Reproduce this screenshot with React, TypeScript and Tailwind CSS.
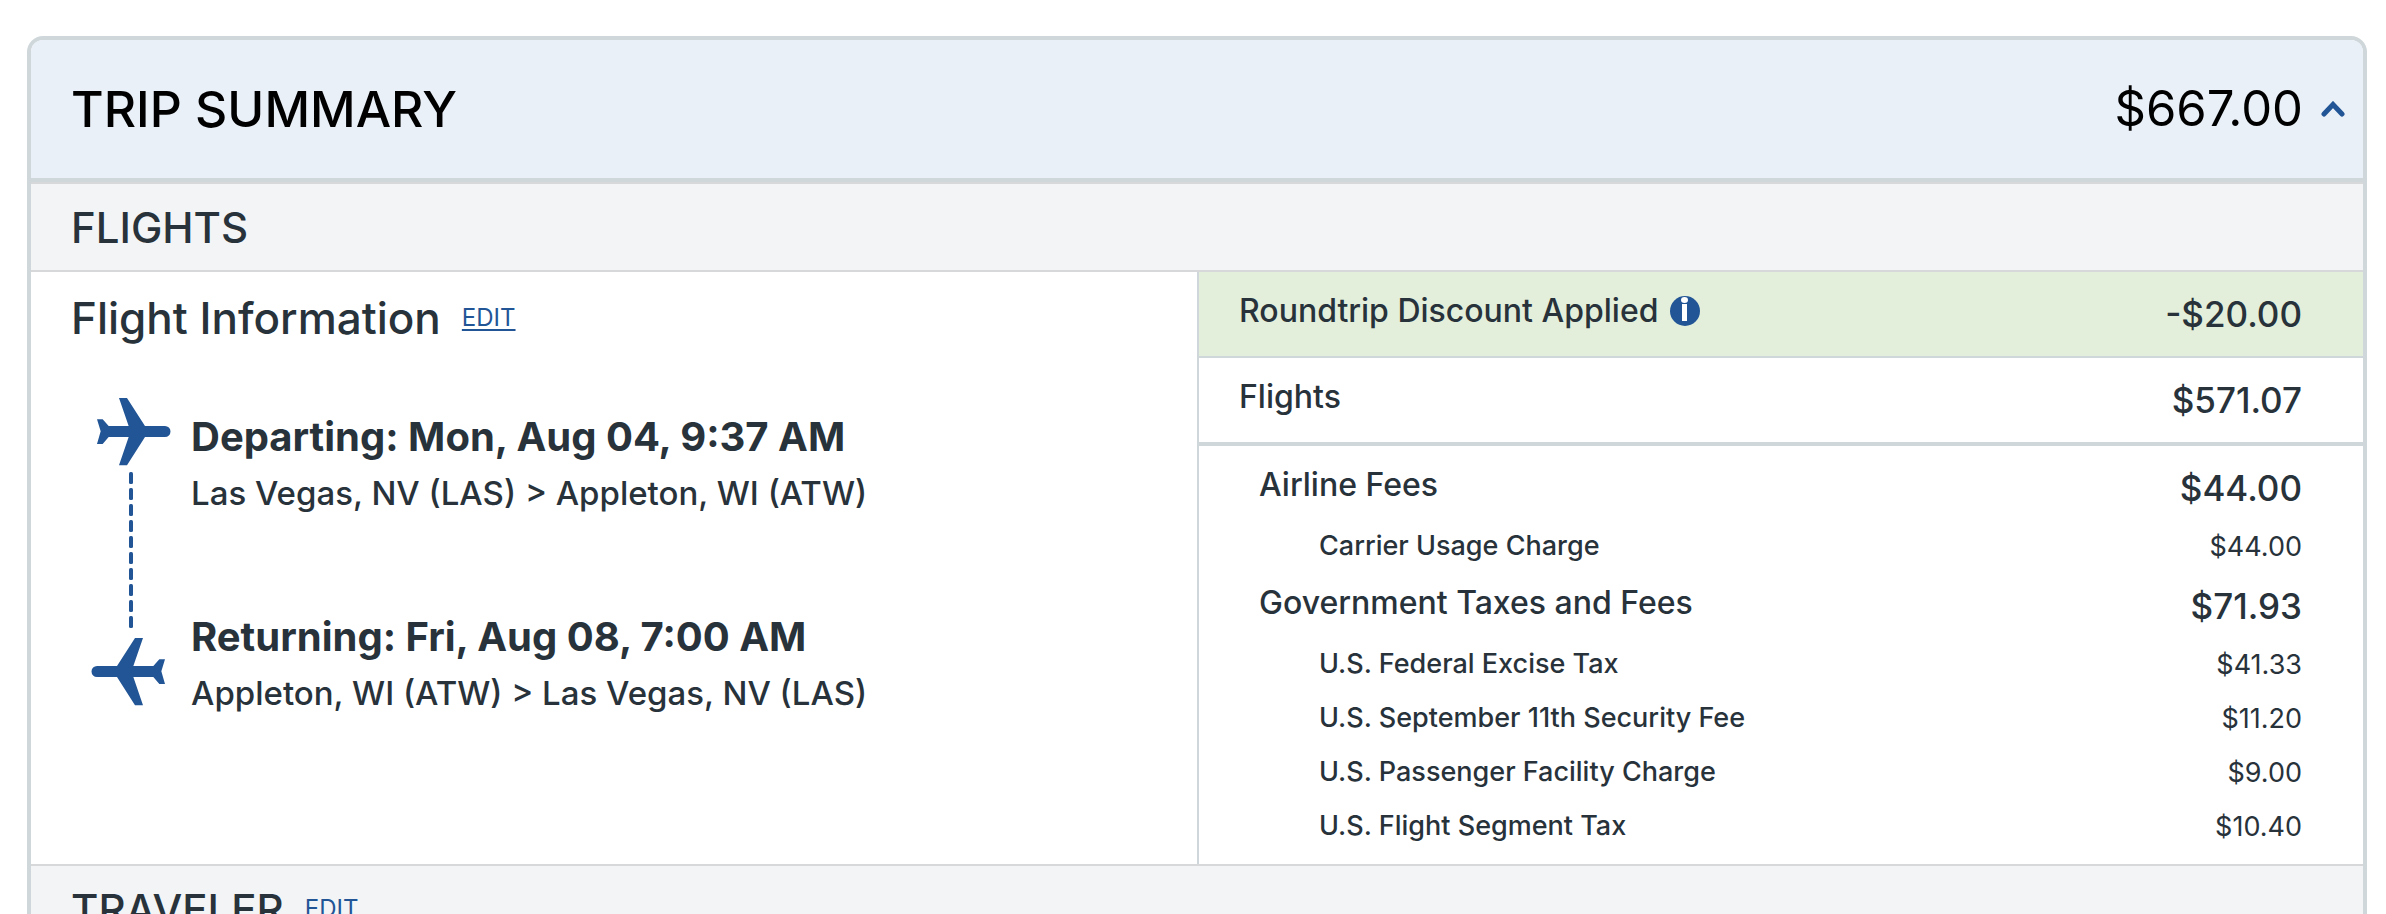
import { useState } from "react";

const fees = [
  { label: "Airline Fees", amount: "$44.00", items: [{ label: "Carrier Usage Charge", amount: "$44.00" }] },
  {
    label: "Government Taxes and Fees",
    amount: "$71.93",
    items: [
      { label: "U.S. Federal Excise Tax", amount: "$41.33" },
      { label: "U.S. September 11th Security Fee", amount: "$11.20" },
      { label: "U.S. Passenger Facility Charge", amount: "$9.00" },
      { label: "U.S. Flight Segment Tax", amount: "$10.40" },
    ],
  },
];

const legs = [
  { title: "Departing: Mon, Aug 04, 9:37 AM", route: "Las Vegas, NV (LAS) > Appleton, WI (ATW)" },
  { title: "Returning: Fri, Aug 08, 7:00 AM", route: "Appleton, WI (ATW) > Las Vegas, NV (LAS)" },
];

const planePath =
  "M0 64 H17 L35 84 H95 L66 0 H90 L144 84 H204 A16.500 16.500 0 0 1 204 117 H144 L90 202 H66 L95 117 H35 L17 138 H0 L11 100 Z";

// dashes between the two planes, 16px apart
const dashes = [0, 1, 2, 3, 4, 5, 6, 7, 8, 9];

function EditLink() {
  return (
    <a href="#edit" className="text-[24px] leading-8 text-[#225596] underline decoration-2 underline-offset-3">
      EDIT
    </a>
  );
}

function RouteGraphic() {
  return (
    <svg viewBox="0 0 80 308" className="w-20 h-[308px] shrink-0" fill="#225596" aria-hidden="true">
      <path d={planePath} transform="translate(6 0) scale(0.3333)" />
      {dashes.map((n) => (
        <rect key={n} x="38" y={74 + n * 16} width="4" height="12" rx="1.500" />
      ))}
      <path d={planePath} transform="translate(74 240) scale(-0.3333 0.3333)" />
    </svg>
  );
}

function FlightInformation() {
  return (
    <div className="pl-10 pt-6">
      <div className="flex items-center gap-[21px]">
        <h3 className="text-[44px] leading-11 font-medium">Flight Information</h3>
        <EditLink />
      </div>
      <div className="flex gap-5 pl-5 mt-[58px]">
        <RouteGraphic />
        <div className="flex flex-col gap-22 pt-[11px]">
          {legs.map((leg) => (
            <div key={leg.title}>
              <p className="text-[40px] leading-14 font-bold">{leg.title}</p>
              <p className="text-[33px] leading-14 font-medium">{leg.route}</p>
            </div>
          ))}
        </div>
      </div>
    </div>
  );
}

function InfoIcon() {
  return (
    <svg viewBox="0 0 30 30" className="size-[30px]" aria-hidden="true">
      <circle cx="15" cy="15" r="15" fill="#225596" />
      <ellipse cx="14.500" cy="4" rx="3.500" ry="3" fill="#fff" />
      <rect x="12" y="8" width="5" height="17" fill="#fff" />
    </svg>
  );
}

function PriceTable() {
  return (
    <table className="w-full border-separate border-spacing-0">
      <tbody>
        <tr className="h-[86px] bg-[#e3efdb]">
          <th scope="row" className="pl-10 pb-1.5 text-left text-[32px] font-medium border-b-2 border-[#cfd7da]">
            <span className="flex items-center gap-3">
              Roundtrip Discount Applied
              <button type="button" aria-label="Discount details" className="cursor-pointer">
                <InfoIcon />
              </button>
            </span>
          </th>
          <td className="pr-[61px] text-right text-[35px] font-medium border-b-2 border-[#cfd7da]">-$20.00</td>
        </tr>
        <tr className="h-[88px]">
          <th scope="row" className="pl-10 pb-1.5 text-left text-[32px] font-medium border-b-4 border-[#cfd7da]">Flights</th>
          <td className="pr-[61px] text-right text-[35px] font-medium border-b-4 border-[#cfd7da]">$571.07</td>
        </tr>
      </tbody>
    </table>
  );
}

function FeeTable() {
  return (
    <table className="w-full my-[10px] border-separate border-spacing-0">
      {fees.map((group) => (
        <tbody key={group.label}>
          <tr className="h-16">
            <th scope="row" className="pl-15 pb-1.5 text-left text-[32px] font-medium">{group.label}</th>
            <td className="pr-[61px] text-right text-[35px] font-medium">{group.amount}</td>
          </tr>
          {group.items.map((item) => (
            <tr key={item.label} className="h-[54px]">
              <th scope="row" className="pl-30 pb-0.5 text-left text-[27px] font-medium">{item.label}</th>
              <td className="pr-[61px] text-right text-[27px]">{item.amount}</td>
            </tr>
          ))}
        </tbody>
      ))}
    </table>
  );
}

export default function App() {
  const [isOpen, setIsOpen] = useState(true);

  return (
    <main className="bg-white pt-9 pl-[27px] pr-[19px] font-['Inter',sans-serif] text-[#28323a]">
      <section className="border-4 border-[#cfd7da] rounded-2xl overflow-hidden">
        <header className="flex items-center justify-between bg-[#eaf0f8] pl-10 pr-[18px] h-[142px] border-b-4 border-[#cfd7da] text-black">
          <h1 className="text-[50px] font-medium">TRIP SUMMARY</h1>
          <div className="flex items-center gap-[18px]">
            <span className="text-[49px]">$667.00</span>
            <button
              type="button"
              aria-label="Toggle trip summary"
              aria-expanded={isOpen}
              onClick={() => setIsOpen(!isOpen)}
              className="cursor-pointer"
            >
              <svg viewBox="0 0 24 16" className="w-6 h-4" fill="none" stroke="#225596" strokeWidth="5" strokeLinecap="round" aria-hidden="true">
                <path d="M3 13 L12 3.500 L21 13" />
              </svg>
            </button>
          </div>
        </header>
        {isOpen && (
          <>
            <div className="flex items-center h-[90px] pl-10 bg-[#f3f4f6] border-y-2 border-[#d6d8d9]">
              <h2 className="text-[42px] font-medium">FLIGHTS</h2>
            </div>
            <div className="grid grid-cols-2">
              <FlightInformation />
              <div className="border-l-2 border-[#cfd7da]">
                <PriceTable />
                <FeeTable />
              </div>
            </div>
            <div className="flex items-center gap-[21px] h-[90px] pl-10 bg-[#f3f4f6] border-y-2 border-[#d6d8d9]">
              <h2 className="text-[42px] font-medium">TRAVELER</h2>
              <EditLink />
            </div>
          </>
        )}
      </section>
    </main>
  );
}
